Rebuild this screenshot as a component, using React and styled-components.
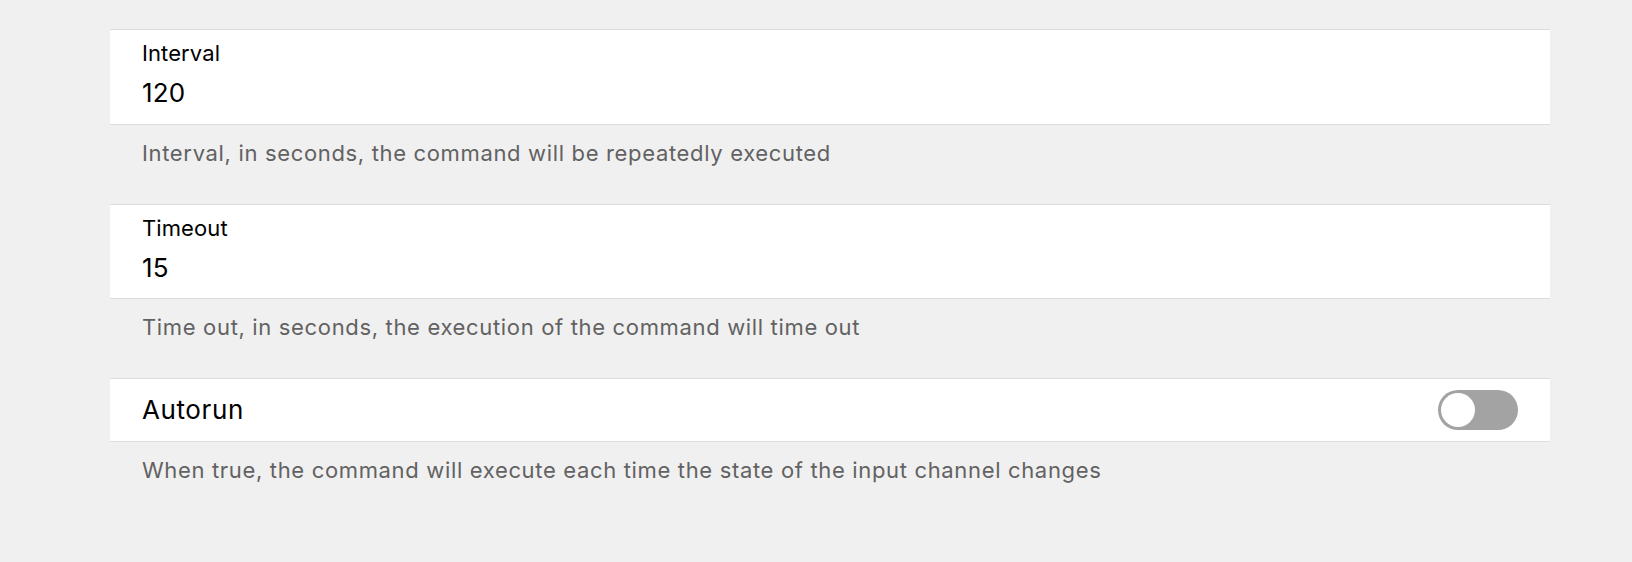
import React, { useState } from "react";
import styled, { createGlobalStyle } from "styled-components";

const Global = createGlobalStyle`
  html, body { margin: 0; padding: 0; background: #f0f0f0; }
  body { font-family: Inter, "Noto Sans", sans-serif; -webkit-font-smoothing: antialiased; }
`;

const Page = styled.div`
  padding: 29px 82px 40px 110px;
  background: #f0f0f0;
  min-height: 562px;
  box-sizing: border-box;
`;

const Card = styled.div`
  box-sizing: border-box;
  height: ${(p) => p.$h}px;
  background: #ffffff;
  border-top: 1px solid #dcdcdc;
  border-bottom: 1px solid #dcdcdc;
  padding: 0 32px 0 32px;
  display: flex;
  flex-direction: ${(p) => (p.$row ? "row" : "column")};
  align-items: ${(p) => (p.$row ? "center" : "stretch")};
  justify-content: ${(p) => (p.$row ? "space-between" : "flex-start")};
`;

const Label = styled.div`
  margin-top: 11px;
  font-size: 22px;
  line-height: 25px;
  letter-spacing: 0.1px;
  color: #000;
`;

const Value = styled.div`
  margin-top: 11px;
  font-size: 26px;
  line-height: 32px;
  letter-spacing: 0.2px;
  color: #000;
`;

const RowTitle = styled.div`
  font-size: 26px;
  line-height: 32px;
  letter-spacing: 0.6px;
  color: #000;
`;

const Help = styled.div`
  box-sizing: border-box;
  height: ${(p) => p.$h}px;
  padding: 15px 32px 0;
  font-size: 22px;
  line-height: 26px;
  letter-spacing: 0.66px;
  color: #626262;
`;

const Track = styled.button`
  width: 80px;
  height: 40px;
  border: none;
  border-radius: 20px;
  padding: 3px;
  background: ${(p) => (p.$on ? "#34c759" : "#a3a3a3")};
  display: flex;
  justify-content: ${(p) => (p.$on ? "flex-end" : "flex-start")};
  align-items: center;
  cursor: pointer;
`;

const Knob = styled.span`
  width: 34px;
  height: 34px;
  border-radius: 50%;
  background: #ffffff;
`;

export default function App() {
  const [on, setOn] = useState(false);
  return (
    <>
      <Global />
      <Page>
        <Card $h={96}>
          <Label>Interval</Label>
          <Value>120</Value>
        </Card>
        <Help $h={79}>Interval, in seconds, the command will be repeatedly executed</Help>
        <Card $h={95}>
          <Label>Timeout</Label>
          <Value>15</Value>
        </Card>
        <Help $h={79}>Time out, in seconds, the execution of the command will time out</Help>
        <Card $h={64} $row>
          <RowTitle>Autorun</RowTitle>
          <Track $on={on} onClick={() => setOn(!on)} aria-label="Autorun">
            <Knob />
          </Track>
        </Card>
        <Help $h={60}>When true, the command will execute each time the state of the input channel changes</Help>
      </Page>
    </>
  );
}
